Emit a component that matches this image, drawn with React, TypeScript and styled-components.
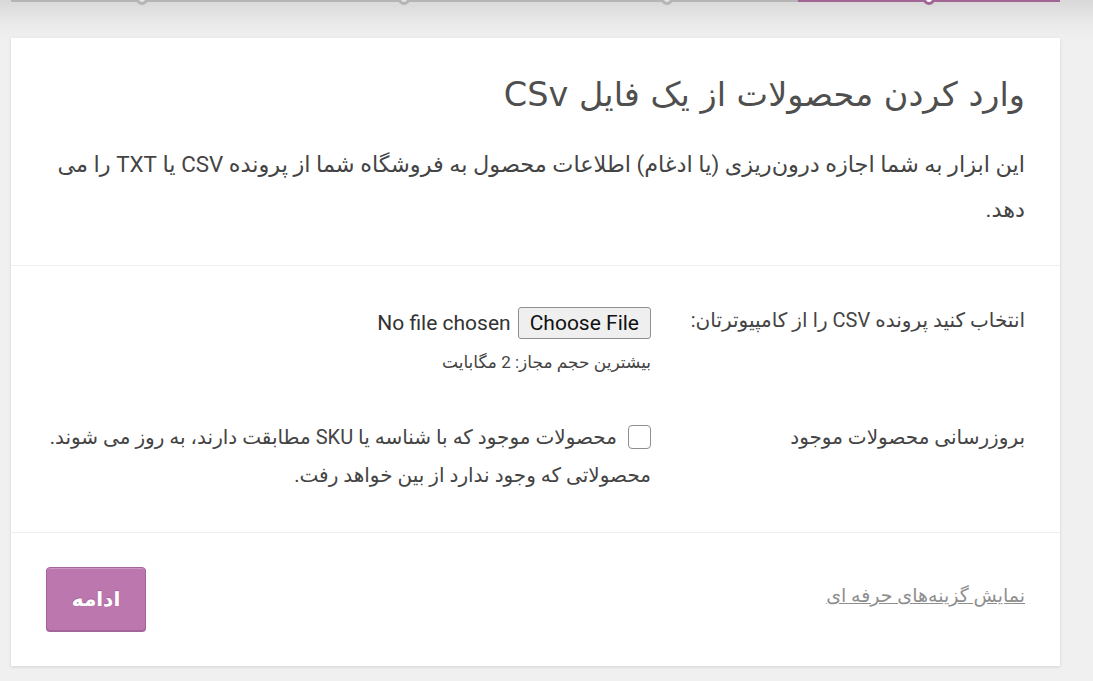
import React from 'react';
import styled, { createGlobalStyle } from 'styled-components';

const GlobalStyle = createGlobalStyle`
  html, body {
    margin: 0;
    padding: 0;
  }
  body {
    background: linear-gradient(#d8d8d9 0, #e9e9e9 22px, #f0f0f0 40px, #f0f0f0 100%);
    font-family: Roboto, "DejaVu Sans", sans-serif;
    color: #444;
    min-height: 681px;
  }
`;

const Page = styled.div`
  direction: rtl;
  width: 1049px;
  margin: 0 33px 0 11px;
`;

const Steps = styled.ol`
  display: flex;
  list-style: none;
  margin: 0;
  padding: 0;
  height: 38px;
`;

const Step = styled.li<{ $active?: boolean }>`
  position: relative;
  flex: 1;
  height: 0;
  border-top: 3px solid ${(p) => (p.$active ? '#a16696' : '#b5b5b5')};
  margin-top: -1px;

  &::before {
    content: '';
    position: absolute;
    top: -9px;
    left: 50%;
    margin-left: -6px;
    width: 6px;
    height: 6px;
    border: 3px solid ${(p) => (p.$active ? '#a16696' : '#b5b5b5')};
    border-radius: 50%;
    background: ${(p) => (p.$active ? '#ffffff' : '#e2e2e2')};
  }
`;

const Card = styled.div`
  background: #fff;
  box-shadow: 0 1px 3px rgba(0, 0, 0, 0.13);
`;

const Header = styled.header`
  padding: 30px 35px 33px;
  border-bottom: 1px solid #eee;
`;

const Title = styled.h1`
  margin: 0;
  font-family: "DejaVu Sans", sans-serif;
  font-size: 33.5px;
  font-weight: 400;
  line-height: 54px;
  color: #4f4f4f;
`;

const Intro = styled.p`
  margin: 20px 0 0;
  font-size: 22.4px;
  line-height: 45px;
  color: #444;
`;

const Fields = styled.section`
  padding: 41px 35px 38px;
  border-bottom: 1px solid #eee;
  display: grid;
  grid-template-columns: 374px 1fr;
  row-gap: 46px;
`;

const Label = styled.div<{ $shift?: number }>`
  font-size: 20px;
  line-height: 38px;
  color: #444;
  margin-top: ${(p) => p.$shift ?? 0}px;
`;

const Field = styled.div`
  display: flex;
  flex-direction: column;
  align-items: flex-start;
`;

const FileInput = styled.input`
  font-family: Roboto, "Liberation Sans", sans-serif;
  font-size: 21px;
  color: #333;
  height: 32px;

  &::file-selector-button {
    font: inherit;
    color: #111;
    height: 32px;
    padding: 0 11px;
    margin-inline-end: 7px;
    border: 1px solid #8f8f8f;
    border-radius: 3px;
    background: #efefef;
  }
`;

const Hint = styled.small`
  margin-top: 13px;
  font-size: 17px;
  color: #444;
`;

const CheckText = styled.label`
  display: block;
  font-size: 20px;
  line-height: 38px;
  color: #444;
`;

const Box = styled.span`
  display: inline-block;
  box-sizing: border-box;
  width: 23px;
  height: 24px;
  margin-inline-end: 11px;
  vertical-align: -5px;
  border: 1px solid #8c8f94;
  border-radius: 4px;
  background: #fff;
`;

const Footer = styled.div`
  display: flex;
  justify-content: space-between;
  align-items: center;
  padding: 34px 35px 35px;
`;

const AdvancedLink = styled.a`
  font-size: 19px;
  color: #8f8f8f;
  text-decoration: underline;
  margin-bottom: 7px;
`;

const NextButton = styled.button`
  width: 100px;
  height: 64px;
  background: #bb77ae;
  border: 1px solid #a36597;
  border-radius: 4px;
  box-shadow: inset 0 1px 0 rgba(255, 255, 255, 0.25), 0 1px 0 #a36597;
  color: #fff;
  font-family: "DejaVu Sans", sans-serif;
  font-size: 20px;
  font-weight: 700;
  text-shadow: 0 -1px 1px #a36597;
`;

const steps = ['بارگذاری فایل CSV', 'نقشه ستون', 'درون‌ریزی', 'انجام شد!'];

export default function App() {
  return (
    <>
      <GlobalStyle />
      <Page>
        <Steps>
          {steps.map((s, i) => (
            <Step key={s} $active={i === 0} aria-label={s} />
          ))}
        </Steps>
        <Card>
          <Header>
            <Title>وارد کردن محصولات از یک فایل CSv</Title>
            <Intro>
              این ابزار به شما اجازه درون‌ریزی (یا ادغام) اطلاعات محصول به فروشگاه شما از پرونده CSV یا TXT را می
              دهد.
            </Intro>
          </Header>
          <Fields>
            <Label $shift={-6}>انتخاب کنید پرونده CSV را از کامپیوترتان:</Label>
            <Field>
              <FileInput type="file" />
              <Hint>بیشترین حجم مجاز: 2 مگابایت</Hint>
            </Field>
            <Label>بروزرسانی محصولات موجود</Label>
            <Field>
              <CheckText>
                <Box />
                محصولات موجود که با شناسه یا SKU مطابقت دارند، به روز می شوند. محصولاتی که وجود ندارد از بین خواهد
                رفت.
              </CheckText>
            </Field>
          </Fields>
          <Footer>
            <AdvancedLink href="#">نمایش گزینه‌های حرفه ای</AdvancedLink>
            <NextButton type="button">ادامه</NextButton>
          </Footer>
        </Card>
      </Page>
    </>
  );
}
